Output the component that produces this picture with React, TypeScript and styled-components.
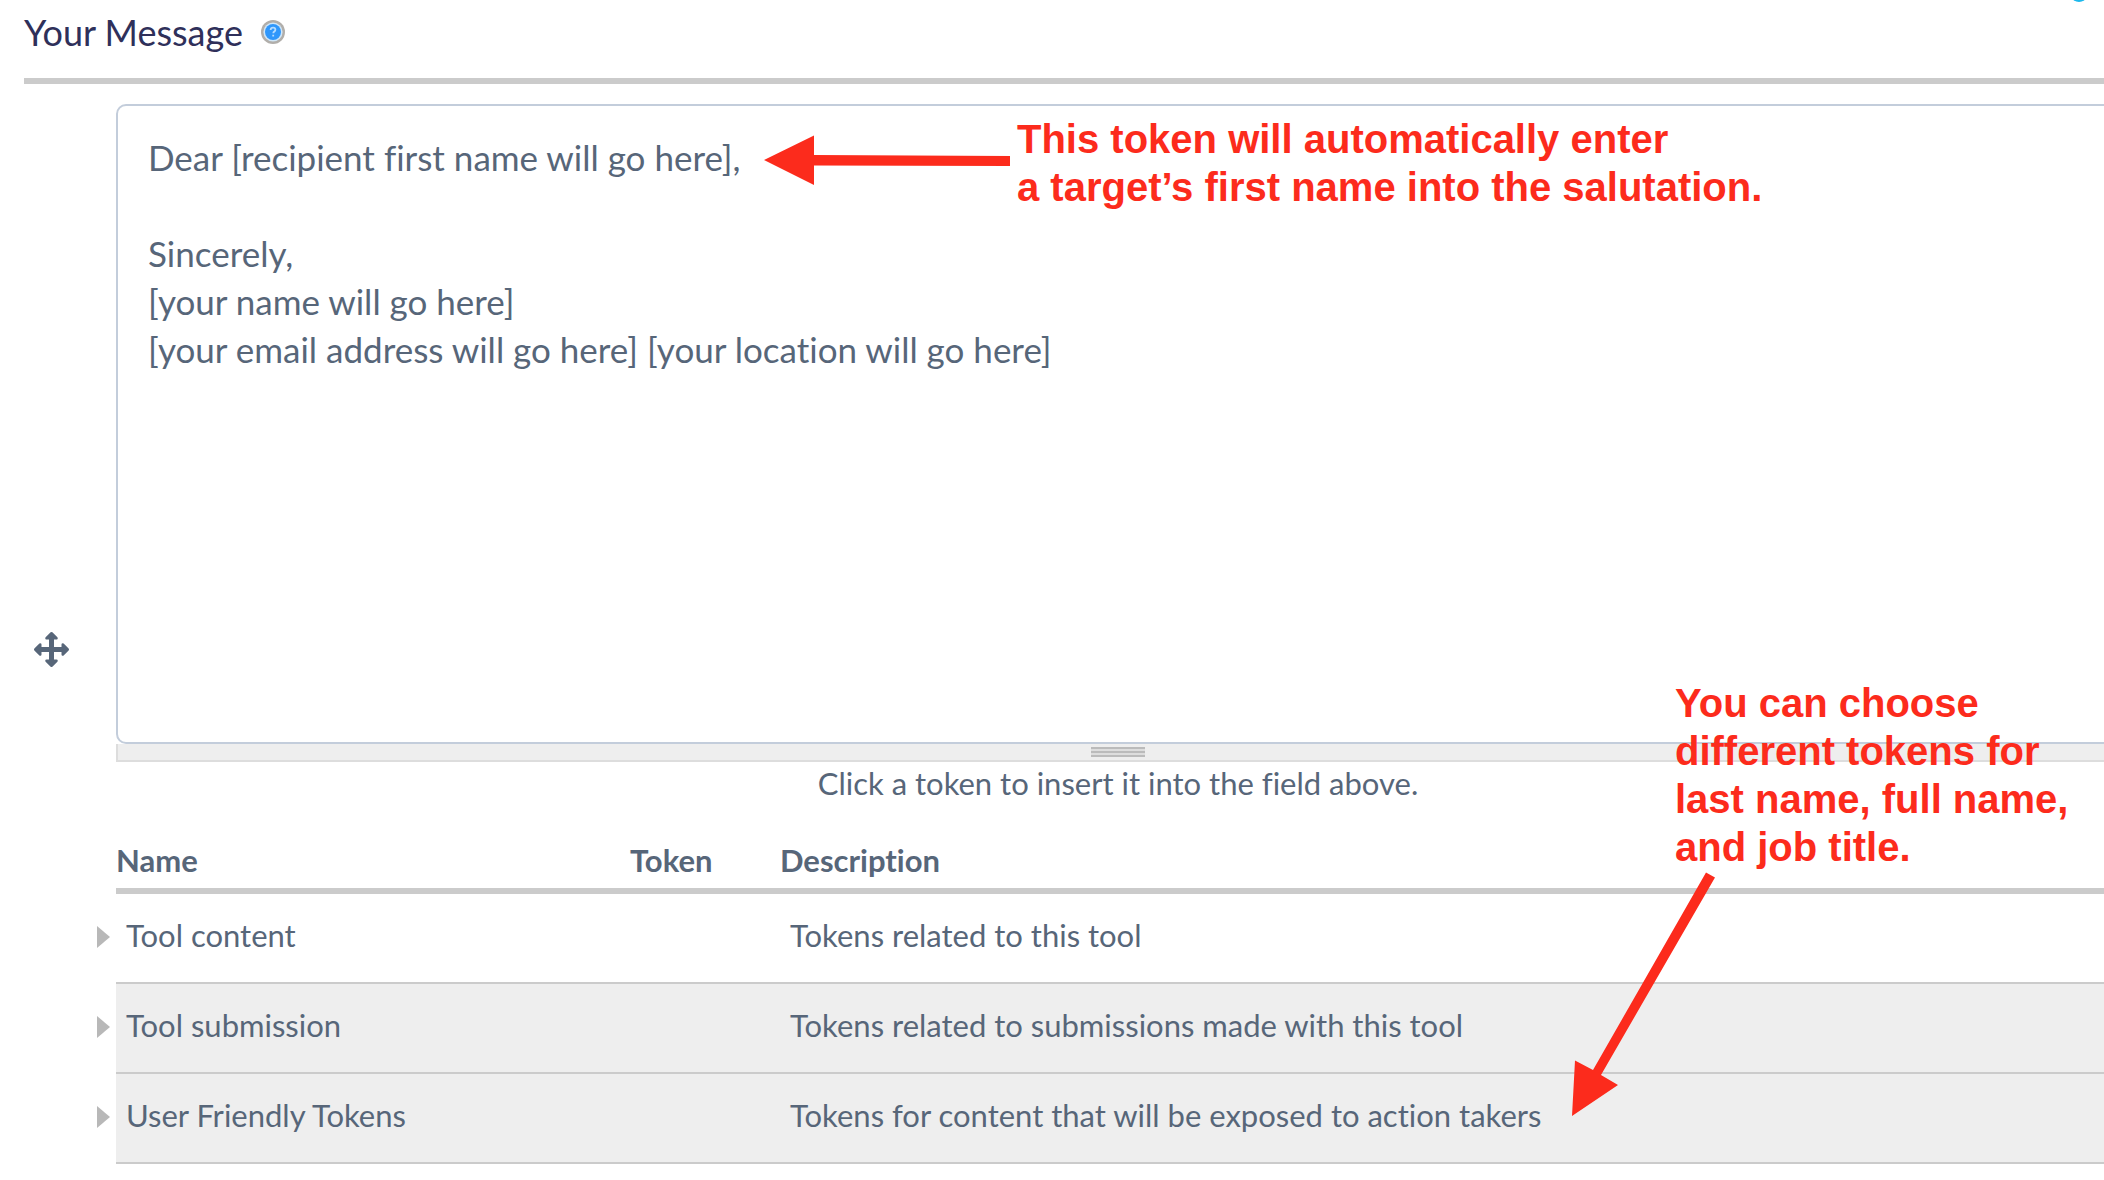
import React from "react";
import styled, { createGlobalStyle } from "styled-components";

const textFont = `Lato, "Open Sans", sans-serif`;
const noteFont = `"Liberation Sans", Arial, sans-serif`;
const slate = "#576679";
const rule = "#cbcbcb";
const red = "#fc2b1c";

const GlobalStyle = createGlobalStyle`
  * { box-sizing: border-box; }
  html { overflow: hidden; }
  body {
    margin: 0;
    background: #fff;
    color: ${slate};
    font-family: ${textFont};
    font-variant-ligatures: none;
  }
`;

const Page = styled.main`
  position: relative;
  min-height: 100vh;
  padding-left: 24px;
  overflow: hidden;
`;

const Header = styled.header`
  display: flex;
  align-items: center;
  gap: 18px;
  height: 84px;
  padding-bottom: 14px;
  border-bottom: 6px solid ${rule};
`;

const Title = styled.label`
  color: #2f305a;
  font-size: 36px;
  line-height: 48px;
`;

const IconButton = styled.button`
  display: flex;
  flex: none;
  padding: 0;
  border: 0;
  background: none;
  color: inherit;
`;

const Editor = styled.div`
  display: grid;
  grid-template-columns: 92px 1fr;
  align-items: start;
  margin: 20px -16px 0 0;
`;

const MoveHandle = styled(IconButton)`
  margin: 528px 0 0 10px;
`;

const Fields = styled.div`
  display: flex;
  flex-direction: column;
`;

const MessageBox = styled.textarea`
  display: block;
  width: 100%;
  height: 640px;
  padding: 27px 30px;
  border: 2px solid #c3cddb;
  border-radius: 10px;
  background: #fff;
  color: ${slate};
  font-family: ${textFont};
  font-size: 35px;
  font-variant-ligatures: none;
  line-height: 48px;
  resize: none;
  outline: 0;
`;

const Grip = styled.div`
  display: flex;
  align-items: center;
  justify-content: center;
  height: 18px;
  border: 2px solid #ddd;
  border-top: 0;
  background: #eee;
`;

const GripLines = styled.span`
  width: 54px;
  height: 10px;
  background: repeating-linear-gradient(#bbb 0 2px, #ddd 2px 4px);
`;

const Hint = styled.p`
  margin: 0;
  padding-bottom: 36px;
  font-size: 31px;
  line-height: 42px;
  text-align: center;
`;

const TokenTable = styled.table`
  width: 100%;
  table-layout: fixed;
  border-collapse: separate;
  border-spacing: 0;
  font-size: 31px;
  line-height: 40px;
  text-align: left;
`;

const HeadCell = styled.th<{ $width?: number }>`
  width: ${(p) => (p.$width ? `${p.$width}px` : "auto")};
  padding: 0 0 8px;
  border-bottom: 6px solid ${rule};
  font-weight: 700;
`;

const Row = styled.tr<{ $shaded: boolean }>`
  background: ${(p) => (p.$shaded ? "#eee" : "transparent")};
`;

const Cell = styled.td`
  height: 90px;
  padding: 0 10px 6px;
  border-bottom: 2px solid ${rule};
`;

const NameCell = styled.div`
  display: flex;
  align-items: center;
  gap: 16px;
  margin-left: -29px;
`;

const ExpandButton = styled(IconButton)`
  padding-top: 4px;
`;

const Note = styled.p<{ $left: number; $top: number }>`
  position: absolute;
  left: ${(p) => p.$left}px;
  top: ${(p) => p.$top}px;
  margin: 0;
  color: ${red};
  font: 700 40px/48px ${noteFont};
  white-space: pre;
`;

const Arrows = styled.svg`
  position: absolute;
  left: 0;
  top: 0;
  pointer-events: none;
`;

const message = `Dear [recipient first name will go here],

Sincerely,
[your name will go here]
[your email address will go here] [your location will go here]`;

const tokens = [
  { name: "Tool content", description: "Tokens related to this tool" },
  { name: "Tool submission", description: "Tokens related to submissions made with this tool" },
  { name: "User Friendly Tokens", description: "Tokens for content that will be exposed to action takers" },
];

function HelpIcon() {
  return (
    <svg width="24" height="24" viewBox="0 0 24 24" aria-hidden="true">
      <circle cx="12" cy="12" r="12" fill="#b1aeaa" />
      <circle cx="12" cy="12" r="9.6" fill="#cfe6f8" />
      <circle cx="12" cy="12" r="8" fill="#2f97fb" />
      <path d="M9.6 10q.2-2.300 2.500-2.300 2.300 0 2.300 2 0 1.200-1.200 1.900-.9.500-.9 1.600M12.200 14.700v1.800" fill="none" stroke="#b5dcff" strokeWidth="1.800" />
    </svg>
  );
}

function MoveIcon() {
  return (
    <svg width="35" height="35" viewBox="0 0 1792 1792" fill={slate} aria-hidden="true">
      <path d="M1792 896q0 26-19 45l-256 256q-19 19-45 19t-45-19-19-45v-128h-384v384h128q26 0 45 19t19 45-19 45l-256 256q-19 19-45 19t-45-19l-256-256q-19-19-19-45t19-45 45-19h128v-384h-384v128q0 26-19 45t-45 19-45-19l-256-256q-19-19-19-45t19-45l256-256q19-19 45-19t45 19 19 45v128h384v-384h-128q-26 0-45-19t-19-45 19-45l256-256q19-19 45-19t45 19l256 256q19 19 19 45t-19 45-45 19h-128v384h384v-128q0-26 19-45t45-19 45 19l256 256q19 19 19 45z" />
    </svg>
  );
}

function Expander() {
  return (
    <svg width="13" height="24" viewBox="0 0 13 24" aria-hidden="true">
      <path d="M0 1L13 12L0 23Z" fill="#b8b8b8" />
    </svg>
  );
}

export default function App() {
  return (
    <Page>
      <GlobalStyle />
      <Header>
        <Title htmlFor="message">Your Message</Title>
        <IconButton type="button" aria-label="Help">
          <HelpIcon />
        </IconButton>
      </Header>
      <Editor>
        <MoveHandle type="button" aria-label="Move">
          <MoveIcon />
        </MoveHandle>
        <Fields>
          <MessageBox id="message" defaultValue={message} spellCheck={false} />
          <Grip>
            <GripLines />
          </Grip>
          <Hint>Click a token to insert it into the field above.</Hint>
          <TokenTable>
            <thead>
              <tr>
                <HeadCell $width={514}>Name</HeadCell>
                <HeadCell $width={150}>Token</HeadCell>
                <HeadCell>Description</HeadCell>
              </tr>
            </thead>
            <tbody>
              {tokens.map((token, i) => (
                <Row key={token.name} $shaded={i > 0}>
                  <Cell>
                    <NameCell>
                      <ExpandButton type="button" aria-label={`Expand ${token.name}`}>
                        <Expander />
                      </ExpandButton>
                      {token.name}
                    </NameCell>
                  </Cell>
                  <Cell />
                  <Cell>{token.description}</Cell>
                </Row>
              ))}
            </tbody>
          </TokenTable>
        </Fields>
      </Editor>
      <Note $left={1017} $top={115}>{"This token will automatically enter\na target’s first name into the salutation."}</Note>
      <Note $left={1675} $top={679}>{"You can choose\ndifferent tokens for\nlast name, full name,\nand job title."}</Note>
      <Arrows width="2104" height="1180" viewBox="0 0 2104 1180" aria-hidden="true">
        <path d="M764 160L814 135.500V155L1010 156V166L814 165.500V185Z" fill={red} />
        <path d="M1572 1116L1575 1060.500L1593 1070L1706 872.500L1715 877.500L1601 1075L1618 1085Z" fill={red} />
        <ellipse cx="2079" cy="-3" rx="7" ry="5" fill="#1cb8ec" />
      </Arrows>
    </Page>
  );
}
